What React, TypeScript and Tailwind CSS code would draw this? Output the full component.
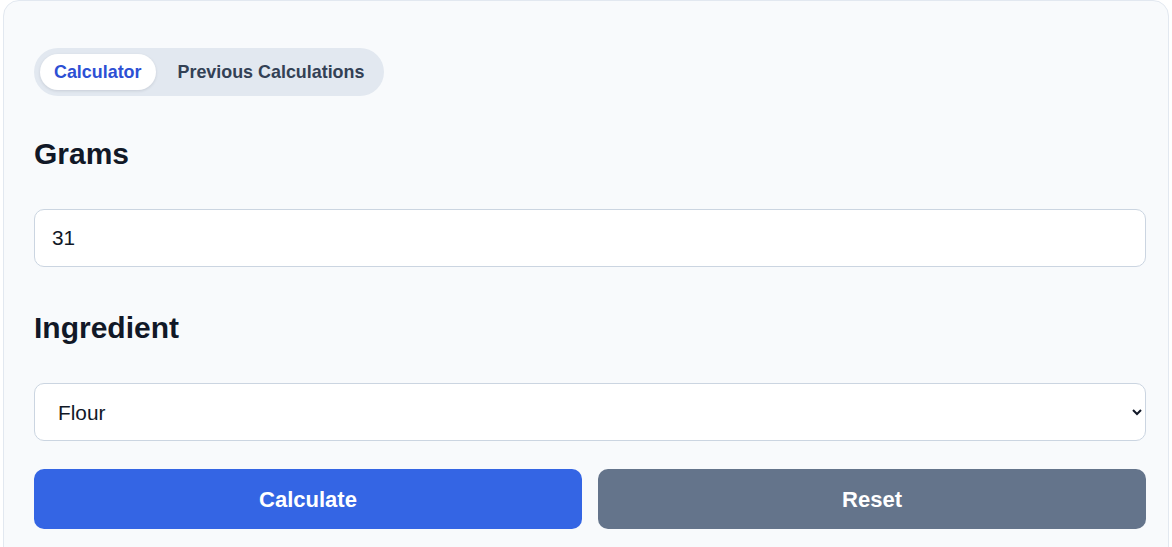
import { useState } from 'react';

const ingredients = ['Flour', 'Sugar', 'Butter', 'Milk', 'Rice'];

const App = () => {
  const [tab, setTab] = useState<'calc' | 'history'>('calc');
  const [grams, setGrams] = useState('31');
  const [ingredient, setIngredient] = useState('Flour');

  const tabClass = (active: boolean) =>
    active
      ? 'rounded-full bg-white px-3.5 h-9 text-[#2d50d4] shadow-[0_1px_3px_rgba(15,23,42,0.12)]'
      : 'rounded-full px-3.5 h-9 text-[#334155]';

  return (
    <div className="min-h-screen bg-white" style={{ fontFamily: '"Liberation Sans", Arial, sans-serif' }}>
      <div className="ml-[3px] w-[1166px] min-h-[600px] rounded-2xl border border-[#e2e8f0] bg-[#f8fafc] pl-[30px] pr-[22px] pt-[47px] pb-10">
        <div className="inline-flex gap-2 rounded-full bg-[#e2e8f0] p-1.5 text-[17.9px] font-bold">
          <button className={tabClass(tab === 'calc')} onClick={() => setTab('calc')}>
            Calculator
          </button>
          <button className={tabClass(tab === 'history')} onClick={() => setTab('history')}>
            Previous Calculations
          </button>
        </div>

        <h2 className="mt-10 text-[30px] leading-[35px] font-bold text-[#111827]">Grams</h2>
        <input
          type="number"
          value={grams}
          onChange={(e) => setGrams(e.target.value)}
          className="mt-[38px] block h-[58px] w-full rounded-[10px] border border-[#cbd5e1] bg-white px-[17px] text-[20.8px] text-[#111827] outline-none"
        />

        <h2 className="mt-[43px] text-[30px] leading-[35px] font-bold text-[#111827]">Ingredient</h2>
        <select
          value={ingredient}
          onChange={(e) => setIngredient(e.target.value)}
          className="mt-[38px] block h-[58px] w-full rounded-[10px] border border-[#cbd5e1] bg-white px-[19px] text-[20.8px] text-[#111827] outline-none"
        >
          {ingredients.map((i) => (
            <option key={i}>{i}</option>
          ))}
        </select>

        <div className="mt-[28px] grid grid-cols-2 gap-4">
          <button className="h-[60px] rounded-[10px] bg-[#3465e4] text-[22px] font-bold text-white">
            Calculate
          </button>
          <button
            className="h-[60px] rounded-[10px] bg-[#64748b] text-[22px] font-bold text-white"
            onClick={() => setGrams('')}
          >
            Reset
          </button>
        </div>
      </div>
    </div>
  );
};

export default App;
